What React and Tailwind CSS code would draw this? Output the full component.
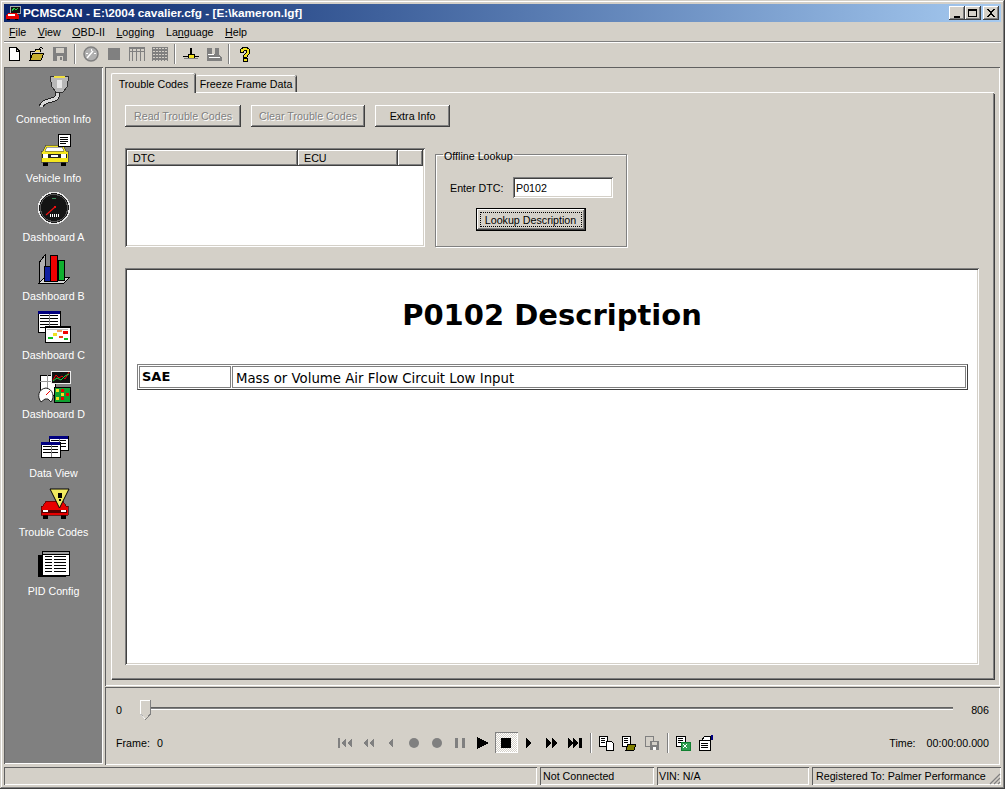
import React from "react";

const raised = "bg-[#d4d0c8] shadow-[inset_-1px_-1px_0_#404040,inset_1px_1px_0_#ffffff,inset_-2px_-2px_0_#808080]";
const sunken = "shadow-[inset_1px_1px_0_#808080,inset_-1px_-1px_0_#ffffff,inset_2px_2px_0_#404040,inset_-2px_-2px_0_#d4d0c8]";
const thinSunken = "shadow-[inset_1px_1px_0_#606060,inset_-1px_-1px_0_#ffffff]";
const uiFont = "font-['Liberation_Sans','Arial',sans-serif] text-[10.7px] leading-[14px] whitespace-nowrap";

function Px({ size = 16, box, children }) {
  return (
    <svg width={size} height={size} viewBox={`0 0 ${box || size} ${box || size}`} shapeRendering="crispEdges">
      {children}
    </svg>
  );
}

// small table used by a few of the sidebar icons
function MiniTable({ x, y, w, h }) {
  const rows = [];
  for (let r = y + 4; r < y + h - 2; r += 3) {
    rows.push(<rect key={r} x={x + 2} y={r} width={w - 4} height="1" fill="#000" />);
  }
  return (
    <g>
      <rect x={x} y={y} width={w} height={h} fill="#fff" stroke="#000" />
      <rect x={x} y={y} width={w} height="3" fill="#000080" />
      {rows}
      <rect x={x + w / 2} y={y + 3} width="1" height={h - 3} fill="#808080" />
    </g>
  );
}

function CarFront({ body, y = 0, dark = "#000" }) {
  return (
    <g transform={`translate(0 ${y})`}>
      <rect x="7" y="19" width="5" height="4" fill={dark} />
      <rect x="25" y="19" width="5" height="4" fill={dark} />
      <polygon points="10,2 27,2 30,8 32,8 32,19 5,19 5,8 7,8" fill={body} stroke="#444" strokeWidth="0.7" />
      <polygon points="11,4 26,4 28,8 9,8" fill="#fff" stroke="#444" strokeWidth="0.5" />
      <rect x="6" y="11" width="25" height="4" fill="#222" />
      <rect x="7" y="11" width="5" height="4" fill="#fff" />
      <rect x="25" y="11" width="5" height="4" fill="#fff" />
      <rect x="15" y="12" width="7" height="2" fill="#fff" />
    </g>
  );
}

const sidebarIcons = {
  connection: (
    <g>
      <path d="M22 20 C22 28 18 27 12 29 C8 30 6 32 5 35" fill="none" stroke="#222" strokeWidth="5" />
      <path d="M22 20 C22 28 18 27 12 29 C8 30 6 32 5 35" fill="none" stroke="#d8d8d8" strokeWidth="3" />
      <polygon points="14,4 33,4 31,15 27,20 20,20 16,15" fill="#b8b8b8" stroke="#333" />
      <rect x="18" y="4" width="11" height="2" fill="#f0e040" />
      <rect x="21" y="8" width="5" height="8" fill="#e8e8e8" />
    </g>
  ),
  vehicle: (
    <g>
      <CarFront body="#f5e61e" y={12} />
      <rect x="22" y="3" width="12" height="12" fill="#fff" stroke="#000" />
      <rect x="24" y="6" width="8" height="1" fill="#000" />
      <rect x="24" y="8" width="8" height="1" fill="#000" />
      <rect x="24" y="10" width="8" height="1" fill="#000" />
      <rect x="24" y="12" width="6" height="1" fill="#000" />
    </g>
  ),
  dashA: (
    <g>
      <circle cx="18" cy="18" r="15.5" fill="#1a1a1a" stroke="#e8e8e8" strokeWidth="1.5" />
      <circle cx="18" cy="18" r="13.5" fill="#141414" stroke="#555" />
      <rect x="16" y="8" width="4" height="1" fill="#3a8a5a" />
      <path d="M10 25 L19 17" stroke="#f01010" strokeWidth="1.2" shapeRendering="auto" />
      <rect x="18" y="16" width="2" height="2" fill="#f01010" />
      <rect x="14" y="24" width="1" height="3" fill="#fff" />
      <rect x="16" y="24" width="1" height="3" fill="#fff" />
      <rect x="18" y="24" width="1" height="3" fill="#fff" />
      <rect x="20" y="24" width="1" height="3" fill="#fff" />
      <rect x="22" y="24" width="1" height="3" fill="#fff" />
    </g>
  ),
  dashB: (
    <g>
      <polygon points="3,14 9,6 9,28 3,34" fill="#b0b0b0" stroke="#000" />
      <polygon points="3,34 9,28 34,28 28,34" fill="#d8d8d8" stroke="#000" />
      <rect x="8" y="17" width="6" height="15" fill="#1020a0" stroke="#000" />
      <rect x="14" y="6" width="7" height="26" fill="#f00000" stroke="#000" />
      <rect x="22" y="11" width="6" height="20" fill="#10b030" stroke="#000" />
    </g>
  ),
  dashC: (
    <g>
      <MiniTable x={2} y={3} w={22} h={21} />
      <rect x="9" y="18" width="25" height="16" fill="#fff" stroke="#000" />
      <rect x="9" y="18" width="25" height="2" fill="#000" />
      <rect x="11" y="21" width="21" height="1" fill="#c0c0c0" />
      <rect x="12" y="29" width="5" height="2" fill="#10c020" />
      <rect x="17" y="25" width="4" height="3" fill="#f0e020" />
      <rect x="23" y="28" width="4" height="2" fill="#f04010" />
      <rect x="27" y="23" width="5" height="3" fill="#f00000" />
      <rect x="21" y="22" width="5" height="2" fill="#f0a060" />
      <rect x="28" y="30" width="4" height="2" fill="#10c020" />
    </g>
  ),
  dashD: (
    <g>
      <rect x="4" y="8" width="15" height="20" fill="#fff" stroke="#000" />
      <rect x="4" y="14" width="15" height="1" fill="#999" />
      <rect x="11" y="8" width="1" height="20" fill="#999" />
      <rect x="15" y="4" width="19" height="12" fill="#111" stroke="#eee" />
      <polyline points="17,13 20,8 23,11 26,9 29,12 33,5" fill="none" stroke="#f00000" shapeRendering="auto" />
      <polyline points="17,14 21,11 25,13 29,9 33,7" fill="none" stroke="#20d040" shapeRendering="auto" />
      <path d="M5 35 C1 30 2 22 10 21 C17 22 19 30 15 35 L12 32 L9 32 Z" fill="#fff" stroke="#222" shapeRendering="auto" />
      <path d="M10 28 L14 24" stroke="#f00000" shapeRendering="auto" />
      <rect x="18" y="20" width="16" height="15" fill="#10a030" stroke="#000" />
      <rect x="20" y="22" width="3" height="3" fill="#f0e020" />
      <rect x="25" y="22" width="3" height="3" fill="#f00000" />
      <rect x="30" y="26" width="3" height="3" fill="#f00000" />
      <rect x="20" y="30" width="3" height="3" fill="#f0e020" />
      <rect x="25" y="30" width="3" height="3" fill="#f00000" />
      <rect x="25" y="26" width="3" height="3" fill="#f0e020" />
    </g>
  ),
  dataView: (
    <g>
      <MiniTable x={13} y={10} w={19} h={14} />
      <MiniTable x={5} y={16} w={19} h={15} />
    </g>
  ),
  trouble: (
    <g>
      <g transform="translate(0 15)">
        <rect x="7" y="15" width="5" height="4" fill="#000" />
        <rect x="25" y="15" width="5" height="4" fill="#000" />
        <polygon points="10,1 27,1 30,6 32,6 32,15 5,15 5,6 7,6" fill="#e80000" stroke="#400" strokeWidth="0.7" />
        <rect x="6" y="10" width="25" height="3" fill="#500" />
        <rect x="7" y="10" width="5" height="2" fill="#fff" />
        <rect x="25" y="10" width="5" height="2" fill="#fff" />
      </g>
      <polygon points="14,4 33,4 23.5,23" fill="#f2ea60" stroke="#000" shapeRendering="auto" />
      <rect x="22" y="8" width="4" height="5" fill="#000" />
      <rect x="23" y="14" width="2" height="2" fill="#000" />
    </g>
  ),
  pid: (
    <g>
      <rect x="2" y="11" width="28" height="22" fill="#000" />
      <rect x="6" y="7" width="27" height="24" fill="#fff" stroke="#000" />
      <rect x="6" y="7" width="27" height="3" fill="#a0a0a0" stroke="#000" />
      {[12, 15, 18, 21, 24, 27].map((y) => (
        <g key={y}>
          <rect x="9" y={y} width="7" height="1" fill="#000" />
          <rect x="18" y={y} width="12" height="1" fill="#000" />
        </g>
      ))}
    </g>
  ),
};

const sidebarItems = [
  ["Connection Info", "connection"],
  ["Vehicle Info", "vehicle"],
  ["Dashboard A", "dashA"],
  ["Dashboard B", "dashB"],
  ["Dashboard C", "dashC"],
  ["Dashboard D", "dashD"],
  ["Data View", "dataView"],
  ["Trouble Codes", "trouble"],
  ["PID Config", "pid"],
];

function SidebarItem({ label, icon }) {
  return (
    <div className="flex h-[59px] flex-col items-center">
      <svg className="mt-[2px]" width="36" height="36" viewBox="0 0 36 36" shapeRendering="crispEdges">
        {sidebarIcons[icon]}
      </svg>
      <div className="mt-[4px] h-[14px] text-white">{label}</div>
    </div>
  );
}

function WinButton({ children }) {
  return (
    <div className={`flex h-[14px] w-[16px] items-center justify-center ${raised}`}>
      <svg width="10" height="9" viewBox="0 0 10 9" shapeRendering="crispEdges">{children}</svg>
    </div>
  );
}

function Separator() {
  return <div className="mx-[3px] h-[20px] w-[2px] border-l border-r border-l-[#808080] border-r-white" />;
}

const DIS = "#808080";

const toolbarIcons = {
  newFile: <path d="M3 1.5H10L13.5 5V14.5H3Z M10 1.5V5H13.5" fill="#fff" stroke="#000" />,
  open: (
    <g>
      <path d="M1 5H6L7 3H11V6" fill="#f0d860" stroke="#000" />
      <polygon points="1,14 4,7 15,7 12,14" fill="#c8b030" stroke="#000" />
      <rect x="1" y="5" width="1" height="9" fill="#000" />
      <path d="M10 3C11 1 13 1 14 3" fill="none" stroke="#000" />
    </g>
  ),
  save: (
    <g>
      <rect x="1" y="1" width="14" height="14" fill={DIS} />
      <rect x="4" y="2" width="8" height="5" fill="#d4d0c8" />
      <rect x="5" y="10" width="6" height="5" fill="#d4d0c8" />
      <rect x="8" y="11" width="2" height="3" fill={DIS} />
    </g>
  ),
  gauge: (
    <g>
      <circle cx="8" cy="8" r="7" fill="#b0b0b0" stroke={DIS} strokeWidth="1.5" shapeRendering="auto" />
      <path d="M4 12L10 5" stroke="#fff" strokeWidth="1.5" shapeRendering="auto" />
      <path d="M3 7L5 8M8 3V5M13 7L11 8" stroke="#fff" />
    </g>
  ),
  stop: <rect x="2" y="2" width="12" height="12" fill={DIS} />,
  cols: (
    <g>
      <rect x="0" y="1" width="16" height="2" fill={DIS} />
      {[0, 3, 7, 11, 15].map((x) => <rect key={x} x={x} y="3" width="1" height="12" fill={DIS} />)}
      <rect x="0" y="5" width="16" height="1" fill={DIS} />
    </g>
  ),
  grid: (
    <g>
      <rect x="0" y="1" width="16" height="14" fill={DIS} />
      {[2, 5, 8, 11, 14].map((y) =>
        [1, 4, 7, 10, 13].map((x) => <rect key={`${x}-${y}`} x={x} y={y} width="2" height="1" fill="#d4d0c8" />)
      )}
    </g>
  ),
  scale: (
    <g>
      <rect x="0" y="10" width="16" height="1" fill="#000" />
      <rect x="7" y="2" width="2" height="6" fill="#000" />
      <rect x="5" y="8" width="6" height="4" fill="#f0e020" stroke="#000" />
      <rect x="1" y="12" width="14" height="1" fill={DIS} />
    </g>
  ),
  cars: (
    <g>
      <path d="M1 2H6V8H9V2H13V9L16 12V15H1Z" fill={DIS} />
      <path d="M2 8H8M3 11H14" stroke="#fff" />
    </g>
  ),
  help: (
    <g>
      <path d="M3 6C3 0 13 0 13 6C13 9 10 8.5 10 11.5H6.5C6.5 7 9.5 8 9.5 6C9.5 4 6.5 4 6.5 6Z" fill="#f0e020" stroke="#000" />
      <rect x="6.5" y="12.5" width="3.5" height="3" fill="#f0e020" stroke="#000" />
    </g>
  ),
};

function ToolIcon({ name }) {
  return (
    <div className="flex w-[23px] items-center justify-center">
      <Px>{toolbarIcons[name]}</Px>
    </div>
  );
}

function Toolbar() {
  return (
    <div className="-ml-[2px] flex h-[21px] items-center">
      <ToolIcon name="newFile" />
      <ToolIcon name="open" />
      <ToolIcon name="save" />
      <Separator />
      <ToolIcon name="gauge" />
      <ToolIcon name="stop" />
      <ToolIcon name="cols" />
      <ToolIcon name="grid" />
      <Separator />
      <ToolIcon name="scale" />
      <ToolIcon name="cars" />
      <Separator />
      <ToolIcon name="help" />
    </div>
  );
}

function Button({ label, width, disabled }) {
  return (
    <div
      className={`flex h-[22px] items-center justify-center ${raised} ${
        disabled ? "text-[#808080] [text-shadow:1px_1px_0_#ffffff]" : "text-black"
      } ${width}`}
    >
      {label}
    </div>
  );
}

const transport = [
  <path key="a" d="M1 3H3V13H1ZM9 3V13L4 8ZM15 3V13L10 8Z" fill={DIS} />,
  <path key="b" d="M8 3V13L3 8ZM14 3V13L9 8Z" fill={DIS} />,
  <path key="c" d="M10 3V13L5 8Z" fill={DIS} />,
  <circle key="d" cx="8" cy="8" r="5" fill={DIS} shapeRendering="auto" />,
  <circle key="e" cx="8" cy="8" r="5" fill={DIS} shapeRendering="auto" />,
  <path key="f" d="M3 3H6V13H3ZM10 3H13V13H10Z" fill={DIS} />,
  <path key="g" d="M2 2L14 8L2 14Z" fill="#000" />,
];

const transportNext = [
  <path key="a" d="M5 3L11 8L5 13Z" fill="#000" />,
  <path key="b" d="M2 3L8 8L2 13ZM8 3L14 8L8 13Z" fill="#000" />,
  <path key="c" d="M1 3L6 8L1 13ZM6 3L11 8L6 13ZM12 3H15V13H12Z" fill="#000" />,
];

const fileIcons = [
  <g key="a">
    <path d="M1 1H9V11H1Z" fill="#fff" stroke="#000" />
    <path d="M3 3H7M3 5H7M3 7H7" stroke="#000" />
    <path d="M8 6H13L15 8V15H8Z" fill="#fff" stroke="#000" />
  </g>,
  <g key="b">
    <path d="M1 1H9V11H1Z" fill="#fff" stroke="#000" />
    <path d="M3 3H7M3 5H7M3 7H7" stroke="#000" />
    <polygon points="5,15 7,9 15,9 13,15" fill="#808000" stroke="#000" />
  </g>,
  <g key="c">
    <path d="M1 1H9V11H1Z" fill="#d4d0c8" stroke={DIS} />
    <rect x="6" y="6" width="9" height="9" fill={DIS} />
    <rect x="8" y="7" width="5" height="3" fill="#d4d0c8" />
    <rect x="9" y="12" width="3" height="3" fill="#fff" />
  </g>,
];

const exportIcons = [
  <g key="a">
    <path d="M1 1H10V11H1Z" fill="#fff" stroke="#000" />
    <path d="M3 3H8M3 5H8M3 7H8" stroke="#000" />
    <rect x="6" y="7" width="9" height="8" fill="#30a050" stroke="#108030" />
    <path d="M8 9L12 13M12 9L8 13" stroke="#fff" />
  </g>,
  <g key="b">
    <path d="M1 5H12V15H1Z" fill="#fff" stroke="#000" />
    <path d="M3 8H10M3 10H10M3 12H10" stroke="#000" />
    <path d="M4 5L7 1H12V5" fill="#fff" stroke="#000" />
    <rect x="13" y="0" width="2" height="5" fill="#000080" />
  </g>,
];

function Slot({ children }) {
  return (
    <div className="flex h-[20px] w-[23px] items-center justify-center">
      <Px>{children}</Px>
    </div>
  );
}

function TransportBar() {
  return (
    <div className="flex items-center">
      {transport.map((icon, i) => <Slot key={i}>{icon}</Slot>)}
      <div className="flex h-[21px] w-[23px] items-center justify-center bg-[repeating-conic-gradient(#ffffff_0_25%,#d4d0c8_0_50%)] bg-[length:2px_2px] shadow-[inset_1px_1px_0_#808080,inset_-1px_-1px_0_#ffffff]">
        <Px><rect x="3" y="3" width="10" height="10" fill="#000" /></Px>
      </div>
      {transportNext.map((icon, i) => <Slot key={i}>{icon}</Slot>)}
      <div className="mx-[3px] h-[20px] w-[2px] border-l border-r border-l-[#808080] border-r-white" />
      {fileIcons.map((icon, i) => <Slot key={i}>{icon}</Slot>)}
      <div className="mx-[3px] h-[20px] w-[2px] border-l border-r border-l-[#808080] border-r-white" />
      {exportIcons.map((icon, i) => <Slot key={i}>{icon}</Slot>)}
    </div>
  );
}

function SliderThumb() {
  return (
    <svg width="11" height="20" viewBox="0 0 11 20" shapeRendering="crispEdges">
      <polygon points="0.5,0.5 10.5,0.5 10.5,14 5.5,19.5 0.5,14" fill="#d4d0c8" stroke="#808080" />
      <path d="M0.5 14V0.5H10" fill="none" stroke="#fff" />
      <path d="M0.5 14L5 19" fill="none" stroke="#fff" shapeRendering="auto" />
    </svg>
  );
}

export default function App() {
  return (
    <div className={`flex h-[789px] w-[1005px] flex-col overflow-hidden bg-[#d4d0c8] p-[4px] text-black shadow-[inset_-1px_-1px_0_#404040,inset_1px_1px_0_#d4d0c8,inset_-2px_-2px_0_#808080,inset_2px_2px_0_#ffffff] ${uiFont}`}>
      {/* title bar */}
      <div className="flex h-[18px] shrink-0 items-center bg-gradient-to-r from-[#0a246a] to-[#a6caf0] pl-[1px] pr-[2px]">
        <svg width="16" height="16" viewBox="0 0 16 16" shapeRendering="crispEdges">
          <rect x="5" y="1" width="10" height="7" fill="#111" stroke="#aaa" />
          <path d="M7 6L9 3L11 5L13 3" fill="none" stroke="#20d040" />
          <polygon points="3,8 11,8 14,11 14,14 1,14 1,11" fill="#e80000" />
          <rect x="3" y="9" width="7" height="2" fill="#fff" />
          <rect x="2" y="14" width="3" height="1" fill="#000" />
          <rect x="10" y="14" width="3" height="1" fill="#000" />
        </svg>
        <div className="ml-[2px] text-[11.8px] font-bold text-white">
          {"PCMSCAN - E:\\2004 cavalier.cfg - [E:\\kameron.lgf]"}
        </div>
        <div className="ml-auto flex items-center">
          <WinButton><rect x="2" y="7" width="6" height="2" fill="#000" /></WinButton>
          <WinButton><path d="M0 0H9V8H0ZM1 2V7H8V2Z" fill="#000" fillRule="evenodd" /></WinButton>
          <div className="ml-[2px]">
            <WinButton>
              <path d="M1 0H3L5 3L7 0H9L6 4L9 8H7L5 5L3 8H1L4 4Z" fill="#000" />
            </WinButton>
          </div>
        </div>
      </div>

      {/* menu */}
      <div className="flex h-[19px] shrink-0 items-center gap-[11.5px] pl-[5px]">
        <span><u>F</u>ile</span>
        <span><u>V</u>iew</span>
        <span><u>O</u>BD-II</span>
        <span><u>L</u>ogging</span>
        <span>La<u>n</u>guage</span>
        <span><u>H</u>elp</span>
      </div>
      <div className="h-[2px] shrink-0 border-t border-b border-t-[#808080] border-b-white" />
      <Toolbar />

      {/* body */}
      <div className="mt-[3px] flex min-h-0 flex-1 gap-[2px]">
        <div className={`flex h-[697px] w-[99px] shrink-0 flex-col bg-[#808080] pt-[3px] ${thinSunken}`}>
          {sidebarItems.map(([label, icon]) => (
            <SidebarItem key={label} label={label} icon={icon} />
          ))}
        </div>

        <div className="flex min-w-0 flex-1 flex-col gap-[1px] pr-[1px]">
          {/* main panel */}
          <div className={`h-[619px] shrink-0 px-[6px] pt-[6px] ${thinSunken}`}>
            <div className="flex h-[20px] items-end">
              <div className="flex h-[20px] w-[84px] items-center justify-center rounded-t-[2px] border-t border-l border-t-white border-l-white shadow-[inset_-1px_0_0_#808080,1px_0_0_#404040]">
                Trouble Codes
              </div>
              <div className="ml-[1px] flex h-[18px] w-[100px] items-center justify-center rounded-t-[2px] border-t border-b border-t-white border-b-white shadow-[inset_-1px_0_0_#808080,1px_0_0_#404040]">
                Freeze Frame Data
              </div>
              <div className="h-[1px] flex-1 self-end bg-white" />
            </div>
            <div className="h-[586px] w-[883px] border-l border-l-white px-[13px] pt-[12px] shadow-[inset_-1px_-1px_0_#808080,1px_1px_0_#404040]">
              <div className="flex gap-[10px]">
                <Button label="Read Trouble Codes" width="w-[116px]" disabled />
                <Button label="Clear Trouble Codes" width="w-[114px]" disabled />
                <Button label="Extra Info" width="w-[75px]" />
              </div>

              <div className="mt-[21px] flex h-[99px] items-end gap-[10px]">
                <div className={`flex h-[99px] w-[300px] flex-col bg-white p-[2px] ${sunken}`}>
                  <div className="flex h-[16px] shrink-0 bg-[#d4d0c8]">
                    <div className={`flex w-[171px] items-center pl-[6px] ${raised}`}>DTC</div>
                    <div className={`flex w-[100px] items-center pl-[6px] ${raised}`}>ECU</div>
                    <div className={`flex-1 ${raised}`} />
                  </div>
                </div>

                <fieldset className="m-0 h-[102px] w-[192px] border border-[#808080] p-0 shadow-[1px_1px_0_#ffffff,inset_1px_1px_0_#ffffff]">
                  <legend className="ml-[7px] px-[1px] pt-[4px]">Offline Lookup</legend>
                  <div className="mt-[14px] flex items-center pl-[14px]">
                    <span className="w-[63px]">Enter DTC:</span>
                    <div className={`flex h-[21px] w-[100px] items-center bg-white pl-[3px] ${sunken}`}>P0102</div>
                  </div>
                  <div className="mt-[10px] flex justify-center pr-[1px]">
                    <div className={`flex h-[23px] w-[110px] items-center justify-center border border-black p-[3px] ${raised}`}>
                      <div className="flex h-full w-full items-center justify-center border border-dotted border-black">
                        Lookup Description
                      </div>
                    </div>
                  </div>
                </fieldset>
              </div>

              {/* html viewer */}
              <div className={`mt-[21px] h-[397px] w-[854px] bg-white p-[2px] ${sunken}`}>
                <h1 className="mt-[23px] text-center font-['DejaVu_Sans','Verdana',sans-serif] text-[29px] leading-[44px] font-bold">
                  P0102 Description
                </h1>
                <div className="mx-[10px] mt-[27px] flex h-[26px] w-[831px] gap-[1px] border border-t-[#808080] border-r-[#404040] border-b-[#404040] border-l-[#808080] p-[1px] font-['DejaVu_Sans','Verdana',sans-serif] text-[13px]">
                  <div className="flex w-[92px] items-center border border-[#808080] pl-[2px] font-bold">SAE</div>
                  <div className="flex flex-1 items-center border border-[#808080] pt-[3px] pl-[3px] text-[13.3px]">
                    Mass or Volume Air Flow Circuit Low Input
                  </div>
                </div>
              </div>
            </div>
          </div>

          {/* playback panel */}
          <div className={`h-[78px] shrink-0 px-[11px] pt-[13px] ${thinSunken}`}>
            <div className="flex h-[20px] items-center">
              <span className="w-[24px]">0</span>
              <SliderThumb />
              <div className="mb-[3px] h-[3px] w-[802px] border-t border-b border-t-[#606060] border-b-white bg-[#808080]" />
              <span className="ml-auto">806</span>
            </div>
            <div className="mt-[12px] flex h-[21px] items-center">
              <span className="w-[41px]">Frame:</span>
              <span>0</span>
              <div className="ml-[171px]">
                <TransportBar />
              </div>
              <span className="ml-auto">Time:</span>
              <span className="ml-[11px]">00:00:00.000</span>
            </div>
          </div>
        </div>
      </div>

      {/* status bar */}
      <div className="mt-[2px] flex h-[18px] shrink-0 gap-[3px]">
        <div className={`w-[533px] ${thinSunken}`} />
        <div className={`flex w-[114px] items-center pl-[3px] ${thinSunken}`}>Not Connected</div>
        <div className={`flex w-[152px] items-center pl-[2px] ${thinSunken}`}>VIN: N/A</div>
        <div className={`flex flex-1 items-center pl-[4px] ${thinSunken}`}>
          <span>Registered To: Palmer Performance</span>
          <svg className="mt-auto ml-auto" width="13" height="13" viewBox="0 0 13 13" shapeRendering="auto">
            <path d="M12 2L2 12M12 6L6 12M12 10L10 12" stroke="#808080" strokeWidth="1.2" />
          </svg>
        </div>
      </div>
    </div>
  );
}
